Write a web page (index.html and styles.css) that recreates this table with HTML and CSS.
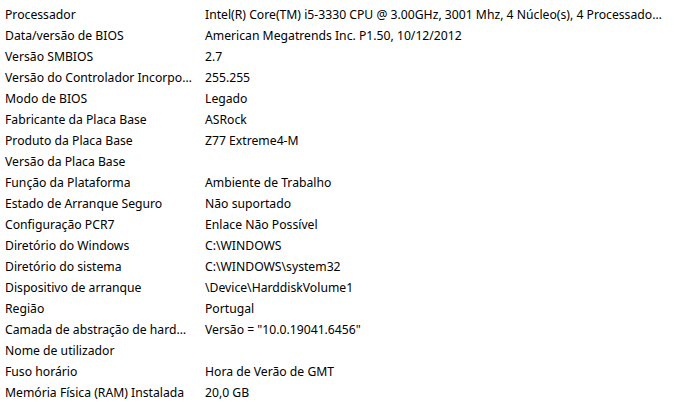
FILE: index.html
```html
<!DOCTYPE html>
<html lang="pt">
<head>
<meta charset="utf-8">
<link rel="stylesheet" href="styles.css">
</head>
<body>
<div class="list">
  <div class="row"><div class="k">Processador</div><div class="v">Intel(R) Core(TM) i5-3330 CPU @ 3.00GHz, 3001 Mhz, 4 Núcleo(s), 4 Processador(es) lógico(s)</div></div>
  <div class="row"><div class="k">Data/versão de BIOS</div><div class="v">American Megatrends Inc. P1.50, 10/12/2012</div></div>
  <div class="row"><div class="k">Versão SMBIOS</div><div class="v">2.7</div></div>
  <div class="row"><div class="k">Versão do Controlador Incorporado</div><div class="v">255.255</div></div>
  <div class="row"><div class="k">Modo de BIOS</div><div class="v">Legado</div></div>
  <div class="row"><div class="k">Fabricante da Placa Base</div><div class="v">ASRock</div></div>
  <div class="row"><div class="k">Produto da Placa Base</div><div class="v">Z77 Extreme4-M</div></div>
  <div class="row"><div class="k">Versão da Placa Base</div><div class="v"></div></div>
  <div class="row"><div class="k">Função da Plataforma</div><div class="v">Ambiente de Trabalho</div></div>
  <div class="row"><div class="k">Estado de Arranque Seguro</div><div class="v">Não suportado</div></div>
  <div class="row"><div class="k">Configuração PCR7</div><div class="v">Enlace Não Possível</div></div>
  <div class="row"><div class="k">Diretório do Windows</div><div class="v">C:\WINDOWS</div></div>
  <div class="row"><div class="k">Diretório do sistema</div><div class="v">C:\WINDOWS\system32</div></div>
  <div class="row"><div class="k">Dispositivo de arranque</div><div class="v">\Device\HarddiskVolume1</div></div>
  <div class="row"><div class="k">Região</div><div class="v">Portugal</div></div>
  <div class="row"><div class="k">Camada de abstração de hardware</div><div class="v">Versão = "10.0.19041.6456"</div></div>
  <div class="row"><div class="k">Nome de utilizador</div><div class="v"></div></div>
  <div class="row"><div class="k">Fuso horário</div><div class="v">Hora de Verão de GMT</div></div>
  <div class="row"><div class="k">Memória Física (RAM) Instalada</div><div class="v">20,0 GB</div></div>
</div>
</body>
</html>
```
FILE: styles.css
```css
html, body {
  margin: 0;
  padding: 0;
  background: #ffffff;
  overflow: hidden;
}
body {
  font-family: "Noto Sans", "Open Sans", sans-serif;
  font-size: 12.2px;
  color: #000000;
}
.list {
  padding-top: 4px;
}
.row {
  display: grid;
  grid-template-columns: 200px 1fr;
  height: 21px;
  line-height: 21px;
}
.k, .v {
  white-space: nowrap;
  overflow: hidden;
  text-overflow: ellipsis;
}
.k {
  padding-left: 5px;
  padding-right: 8px;
}
.v {
  padding-left: 5px;
  padding-right: 12px;
}
```
